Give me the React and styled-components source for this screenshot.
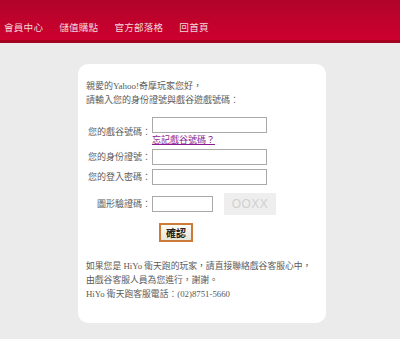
import React from 'react';
import styled, { createGlobalStyle } from 'styled-components';

const GlobalStyle = createGlobalStyle`
	html, body {
		margin: 0;
		padding: 0;
		background: #ebebeb;
	}
	body {
		font-family: 'Liberation Serif', 'Noto Sans CJK TC', serif;
		color: #5a5a5a;
	}
`

const Header = styled.div`
	height: 43px;
	background: linear-gradient(#b1042a, #cd002e);
	border-bottom: 3px solid #a4001f;
	display: flex;
	align-items: flex-end;
	padding: 0 0 6px 4px;
	box-sizing: border-box;
	gap: 16px;
`

const NavItem = styled.a`
	font-family: 'Noto Sans CJK TC', sans-serif;
	font-size: 9.6px;
	letter-spacing: 0.2px;
	line-height: 14px;
	color: #f2d6dc;
	text-decoration: none;
`

const Card = styled.div`
	width: 248px;
	margin: 21px 0 0 78px;
	background: #fff;
	border-radius: 10px;
	padding: 15px 8px 22px 8px;
	box-sizing: border-box;
	font-size: 9px;
	line-height: 14px;
`

const Intro = styled.p`
	margin: 0 0 10px;
`

const Row = styled.div`
	display: grid;
	grid-template-columns: 65px 1fr;
	column-gap: 1px;
	align-items: center;
	margin-top: ${p => p.$top || 0}px;
`

const Label = styled.span`
	text-align: right;
	white-space: nowrap;
`

const Field = styled.div`
	display: flex;
	flex-direction: column;
	align-items: flex-start;
`

const Inline = styled.div`
	display: flex;
	align-items: center;
	gap: 11px;
`

const Input = styled.input`
	width: ${p => p.$w || 115}px;
	height: 16px;
	box-sizing: border-box;
	border: 1px solid #a9a9a9;
	padding: 0;
	margin: 0;
	background: #fff;
`

const Forgot = styled.a`
	color: #8a1a8f;
	text-decoration: underline;
	font-family: 'Noto Sans CJK TC', sans-serif;
`

const Captcha = styled.div`
	width: 52px;
	height: 22px;
	background: #eeeeee;
	color: #d0d0d0;
	font-family: 'Liberation Sans', sans-serif;
	font-size: 12px;
	display: flex;
	align-items: center;
	justify-content: center;
	letter-spacing: 0.5px;
`

const Submit = styled.button`
	margin: 8px 0 0 73px;
	width: 34px;
	height: 19px;
	padding: 0;
	border: 2px solid #cc7a3a;
	background: linear-gradient(#fbfbf6, #e8e6d9);
	font-family: 'Noto Sans CJK TC', sans-serif;
	font-weight: bold;
	font-size: 10px;
	color: #222;
	box-sizing: border-box;
	line-height: 13px;
`

const Notice = styled.p`
	margin: 17px 0 0;
	font-size: 8.8px;
	white-space: nowrap;
`

const App = () => {
	return (
		<>
			<GlobalStyle />
			<Header>
				<NavItem>會員中心</NavItem>
				<NavItem>儲值購點</NavItem>
				<NavItem>官方部落格</NavItem>
				<NavItem>回首頁</NavItem>
			</Header>
			<Card>
				<Intro>
					親愛的Yahoo!奇摩玩家您好，<br />
					請輸入您的身份證號與戲谷遊戲號碼：
				</Intro>
				<Row>
					<Label>您的戲谷號碼：</Label>
					<Field>
						<Input />
						<Forgot>忘記戲谷號碼？</Forgot>
					</Field>
				</Row>
				<Row $top={2}>
					<Label>您的身份證號：</Label>
					<Input />
				</Row>
				<Row $top={4}>
					<Label>您的登入密碼：</Label>
					<Input type="password" />
				</Row>
				<Row $top={8}>
					<Label>圖形驗證碼：</Label>
					<Inline>
						<Input $w={61} />
						<Captcha>OOXX</Captcha>
					</Inline>
				</Row>
				<Submit>確認</Submit>
				<Notice>
					如果您是 HiYo 衛天跑的玩家，請直接聯絡戲谷客服心中，<br />
					由戲谷客服人員為您進行，謝謝。<br />
					HiYo 衛天跑客服電話：(02)8751-5660
				</Notice>
			</Card>
		</>
	);
}

export default App;
